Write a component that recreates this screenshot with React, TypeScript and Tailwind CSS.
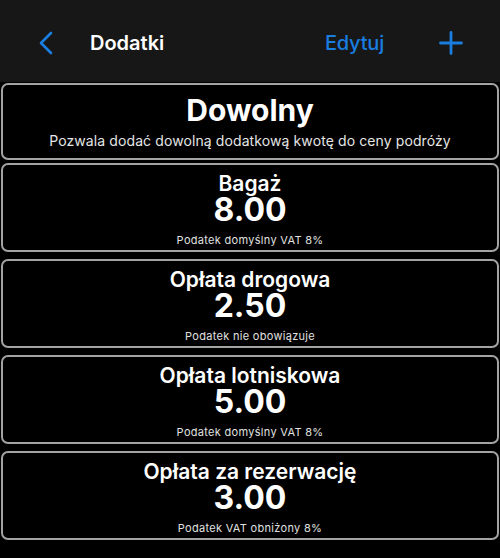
import React from 'react';

type Extra = { name: string; price: string; tax: string };

const extras: Extra[] = [
  { name: 'Bagaż', price: '8.00', tax: 'Podatek domyślny VAT 8%' },
  { name: 'Opłata drogowa', price: '2.50', tax: 'Podatek nie obowiązuje' },
  { name: 'Opłata lotniskowa', price: '5.00', tax: 'Podatek domyślny VAT 8%' },
  { name: 'Opłata za rezerwację', price: '3.00', tax: 'Podatek VAT obniżony 8%' },
];

const App: React.FC = () => {
  return (
    <div className="w-[500px] h-[558px] bg-black overflow-hidden font-['Inter',sans-serif] text-white">
      {/* Nav bar */}
      <header className="h-[82px] bg-[#171717] flex items-center px-[38px] pt-[4px]">
        <svg width="16" height="24" viewBox="0 0 16 24" fill="none" className="mr-[36px]">
          <path d="M13 2 L3 12 L13 22" stroke="#1a7fe3" strokeWidth="2.6" strokeLinecap="round" strokeLinejoin="round" />
        </svg>
        <h1 className="text-[20px] font-semibold">Dodatki</h1>
        <button className="ml-auto text-[20px] font-medium text-[#1a7de0] tracking-[-0.2px]">Edytuj</button>
        <svg width="24" height="24" viewBox="0 0 24 24" fill="none" className="ml-[55px] mr-[-1px]">
          <path d="M12 1.5 V22.5 M1.5 12 H22.5" stroke="#1a7de0" strokeWidth="2.8" strokeLinecap="round" />
        </svg>
      </header>

      <div className="flex flex-col gap-[7px] px-[1px] pt-[1px]">
        {/* Custom amount card */}
        <div className="h-[77px] mb-[-4px] border-2 border-[#a3a3a3] rounded-[7px] flex flex-col items-center justify-center">
          <div className="text-[30px] font-bold leading-[34px]">Dowolny</div>
          <div className="text-[14px] text-[#e5e5e5] leading-[20px] mt-[4px] tracking-[0.1px]">
            Pozwala dodać dowolną dodatkową kwotę do ceny podróży
          </div>
        </div>

        {extras.map(extra => (
          <div
            key={extra.name}
            className="h-[89px] border-2 border-[#a3a3a3] rounded-[7px] flex flex-col items-center pt-[8px]"
          >
            <div className="text-[21px] font-semibold leading-[22px]">{extra.name}</div>
            <div className="text-[32px] font-bold leading-[30px]">{extra.price}</div>
            <div className="text-[11px] leading-[14px] text-[#e0e0e0] tracking-[0.3px] mt-[8px]">{extra.tax}</div>
          </div>
        ))}
      </div>
    </div>
  );
};

export default App;
